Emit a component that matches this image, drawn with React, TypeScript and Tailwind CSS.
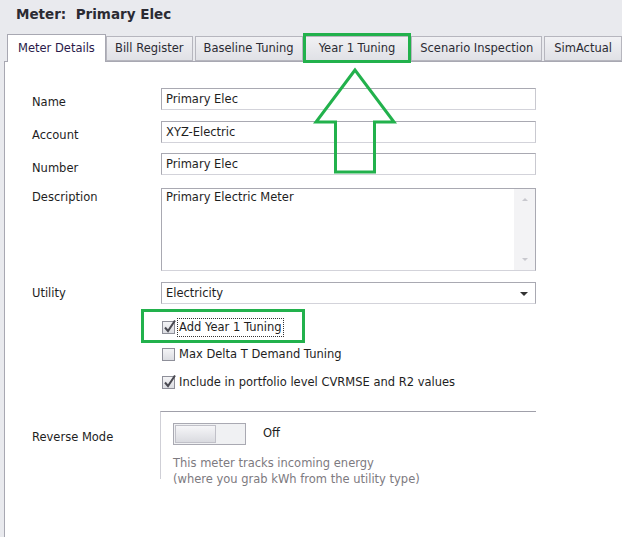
const font = { fontFamily: '"DejaVu Sans", Tahoma, sans-serif' };

const tabs = [
  { label: "Meter Details", w: "w-[99px]", active: true },
  { label: "Bill Register", w: "w-[87px]" },
  { label: "Baseline Tuning", w: "w-[108px]" },
  { label: "Year 1 Tuning", w: "w-[105px]" },
  { label: "Scenario Inspection", w: "w-[131px]" },
  { label: "SimActual", w: "w-[78px]" },
];

function Check({ checked }: { checked?: boolean }) {
  return (
    <span className="relative w-[13px] h-[13px] shrink-0 border border-[#8e8f99] bg-gradient-to-b from-[#f4f4f6] to-[#dcdde2]">
      {checked && (
        <svg className="absolute -top-[3px] left-[0px]" width="14" height="15" viewBox="0 0 14 15">
          <path d="M2 8.5 L5 12 L12 1.5" fill="none" stroke="#4a4a52" strokeWidth="2" />
        </svg>
      )}
    </span>
  );
}

function Input({ value }: { value: string }) {
  return (
    <div className="w-[375px] h-[22px] border border-[#a9a9b2] border-b-[#d3d3da] border-r-[#c9c9d0] px-[4px] pt-[1px] flex items-center text-[11.5px] text-[#1e1e1e]">
      {value}
    </div>
  );
}

function Row({ label, pt, className, children }: { label: string; pt: string; className?: string; children: React.ReactNode }) {
  return (
    <div className={`flex ${className ?? ""}`}>
      <div className={`w-[129px] ${pt} leading-[15px] text-[11.5px] text-[#1e1e1e]`}>{label}</div>
      {children}
    </div>
  );
}

export default function App() {
  return (
    <div className="relative w-[622px] h-[537px] overflow-hidden bg-[#e9eaee]" style={font}>
      {/* Header */}
      <div className="h-[34px] pl-[16px] pt-[4px] text-[13.5px] font-bold text-[#2b2b33]">
        Meter:&nbsp; Primary Elec
      </div>

      {/* Tabs */}
      <div className="h-[27px] flex items-end pl-[7px]">
        {tabs.map((t, i) =>
          t.active ? (
            <div
              key={i}
              className={`${t.w} h-[28px] -mb-[1px] bg-white border border-b-0 border-[#a8a8b2] flex items-center justify-center text-[11.5px] text-[#2a1a4a] relative z-10`}
            >
              {t.label}
            </div>
          ) : (
            <div
              key={i}
              className={`${t.w} h-[25px] mr-[2px] last:mr-0 border border-[#b6b6be] bg-gradient-to-b from-[#f1f1f4] to-[#e0e1e6] flex items-center justify-center text-[11.5px] text-[#2b2b33]`}
            >
              {t.label}
            </div>
          )
        )}
      </div>

      {/* Content panel */}
      <div className="ml-[4px] h-[476px] bg-white border-t border-l border-[#a8a8b2] pl-[27px] pt-[26px]">
        <div className="flex flex-col">
          <Row label="Name" pt="pt-[7px]">
            <Input value="Primary Elec" />
          </Row>
          <Row label="Account" pt="pt-[7px]" className="mt-[11px]">
            <Input value="XYZ-Electric" />
          </Row>
          <Row label="Number" pt="pt-[8px]" className="mt-[10px]">
            <Input value="Primary Elec" />
          </Row>
          <Row label="Description" pt="pt-[2px]" className="mt-[12px]">
            <div className="w-[375px] h-[83px] border border-[#a9a9b2] border-b-[#d3d3da] flex">
              <div className="flex-1 px-[4px] pt-[1px] leading-[15px] text-[11.5px] text-[#1e1e1e]">Primary Electric Meter</div>
              <div className="w-[21px] bg-[#f3f3f5] flex flex-col items-center justify-between py-[9px]">
                <span className="w-0 h-0 border-x-[3px] border-x-transparent border-b-[3px] border-b-[#c8c8ce]" />
                <span className="w-0 h-0 border-x-[3px] border-x-transparent border-t-[3px] border-t-[#c8c8ce]" />
              </div>
            </div>
          </Row>
          <Row label="Utility" pt="pt-[4px]" className="mt-[11px]">
            <div className="w-[375px] h-[22px] border border-[#a9a9b2] border-b-[#d3d3da] px-[4px] pt-[1px] flex items-center justify-between text-[11.5px] text-[#1e1e1e]">
              <span>Electricity</span>
              <span className="mr-[3px] w-0 h-0 border-x-[4px] border-x-transparent border-t-[4px] border-t-[#333]" />
            </div>
          </Row>
        </div>

        {/* Checkboxes */}
        <div className="ml-[130px] mt-[14px] flex flex-col text-[11.5px] text-[#1e1e1e]">
          <div className="flex items-center gap-[2px] h-[19px]">
            <Check checked />
            <span className="border border-dotted border-[#333] px-[1px] h-[19px] flex items-center">Add Year 1 Tuning</span>
          </div>
          <div className="flex items-center gap-[4px] h-[19px] mt-[8px]">
            <Check />
            <span>Max Delta T Demand Tuning</span>
          </div>
          <div className="flex items-center gap-[4px] h-[19px] mt-[9px]">
            <Check checked />
            <span>Include in portfolio level CVRMSE and R2 values</span>
          </div>
        </div>

        {/* Reverse mode */}
        <div className="flex mt-[19px]">
          <div className="w-[128px] pt-[19px] leading-[15px] text-[11.5px] text-[#1e1e1e]">Reverse Mode</div>
          <div className="w-[376px] h-[68px] border-t border-t-[#a0a0aa] border-l border-l-[#cfcfd6] pl-[12px] pt-[11px]">
            <div className="flex items-center">
              <div className="w-[73px] h-[22px] border border-[#a9a9b2] bg-[#f0f1f3] p-[1px]">
                <div className="w-[41px] h-full border border-[#c0c0c8] bg-gradient-to-b from-[#f6f6f8] to-[#dadbe0]" />
              </div>
              <span className="ml-[17px] text-[11.5px] text-[#1e1e1e]">Off</span>
            </div>
            <div className="mt-[10px] text-[11.5px] leading-[16px] text-[#7d7a80] whitespace-nowrap">
              This meter tracks incoming energy
              <br />
              (where you grab kWh from the utility type)
            </div>
          </div>
        </div>
      </div>

      {/* Annotation overlay */}
      <svg className="absolute inset-0 pointer-events-none" width="622" height="537">
        <rect x="304.5" y="34.5" width="105" height="27" fill="none" stroke="#22b14c" strokeWidth="3" />
        <polygon
          points="355,70 316,122 335.5,122 335.5,172 374.5,172 374.5,122 394,122"
          fill="none"
          stroke="#22b14c"
          strokeWidth="3"
        />
        <rect x="142.5" y="310.5" width="161" height="31" fill="none" stroke="#22b14c" strokeWidth="3" />
      </svg>
    </div>
  );
}
